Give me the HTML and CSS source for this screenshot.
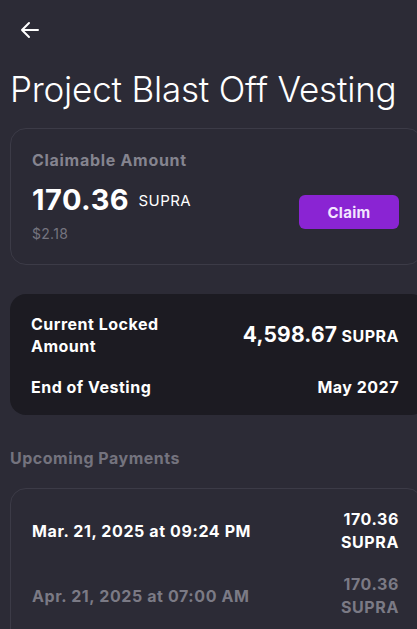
FILE: index.html
```html
<!DOCTYPE html>
<html lang="en">
<head>
    <meta charset="UTF-8">
    <meta name="viewport" content="width=device-width, initial-scale=1.0">
    <title>Project Blast Off Vesting</title>
    <link rel="stylesheet" href="styles.css">
</head>
<body>

<div id="page">
    <button class="back" aria-label="Back">
        <svg width="24" height="24" viewBox="0 0 24 24" fill="none" stroke="#fff" stroke-width="2" stroke-linecap="round" stroke-linejoin="round">
            <path d="M20 12H4M11 5l-7 7 7 7"/>
        </svg>
    </button>

    <h1>Project Blast Off Vesting</h1>

    <div class="card claimable">
        <div>
            <div class="label">Claimable Amount</div>
            <div class="amount">170.36 <span>SUPRA</span></div>
            <div class="usd">$2.18</div>
        </div>
        <button class="claim">Claim</button>
    </div>

    <div class="card locked">
        <div class="row">
            <div class="key">Current Locked<br>Amount</div>
            <div class="val"><span class="big">4,598.67</span> SUPRA</div>
        </div>
        <div class="row">
            <div class="key">End of Vesting</div>
            <div class="val">May 2027</div>
        </div>
    </div>

    <h2>Upcoming Payments</h2>

    <div class="card payments">
        <div class="payment">
            <div>Mar. 21, 2025 at 09:24 PM</div>
            <div class="pay-amt">170.36<br>SUPRA</div>
        </div>
        <div class="payment muted">
            <div>Apr. 21, 2025 at 07:00 AM</div>
            <div class="pay-amt">170.36<br>SUPRA</div>
        </div>
    </div>
</div>

</body>
</html>
```

FILE: styles.css
```css
* {
    box-sizing: border-box;
    font-family: Inter, 'Noto Sans', sans-serif;
}

body {
    margin: 0;
    padding: 0;
    background-color: #2c2b36;
    color: #fff;
    overflow: hidden;
}

#page {
    padding: 18px 0 0 10px;
}

.back {
    background: none;
    border: none;
    padding: 0;
    margin-left: 8px;
    width: 24px;
    height: 24px;
    display: block;
}

h1 {
    font-size: 35px;
    font-weight: 300;
    margin: 25px 0 17px;
    line-height: 44px;
    white-space: nowrap;
    letter-spacing: -0.2px;
}

.card {
    border-radius: 16px;
    margin-right: -6px;
}

.claimable {
    border: 1px solid #3c3b47;
    background-color: #2b2a35;
    display: flex;
    align-items: flex-start;
    justify-content: space-between;
    padding: 20px 23px 0 21px;
    height: 137px;
}

.label {
    color: #85848f;
    font-weight: 700;
    font-size: 16px;
    line-height: 22px;
    letter-spacing: 0.7px;
}

.amount {
    font-size: 29px;
    font-weight: 700;
    margin-top: 12px;
    line-height: 34px;
    letter-spacing: 0.5px;
}
.amount span {
    font-size: 15px;
    font-weight: 400;
    vertical-align: 4px;
    letter-spacing: 0.4px;
    margin-left: 2px;
}

.usd {
    color: #75747f;
    font-size: 14px;
    line-height: 20px;
    margin-top: 6px;
    letter-spacing: 0.3px;
}

.claim {
    background-color: #8a24d3;
    color: #f3e6ff;
    border: none;
    border-radius: 6px;
    width: 100px;
    height: 34px;
    font-size: 15px;
    font-weight: 700;
    margin-top: 46px;
    letter-spacing: 0.3px;
}

.locked {
    background-color: #1c1b22;
    margin-top: 29px;
    margin-right: -10px;
    padding: 19px 28px 15px 21px;
    height: 121px;
}

.locked .row {
    display: flex;
    justify-content: space-between;
    align-items: center;
    font-weight: 700;
    font-size: 16px;
    line-height: 22px;
    letter-spacing: 0.5px;
}
.locked .row + .row {
    margin-top: 19px;
}
.locked .big {
    font-size: 21px;
    letter-spacing: 0.2px;
}

h2 {
    color: #74737e;
    font-size: 16px;
    font-weight: 700;
    margin: 33px 0 20px;
    letter-spacing: 0.5px;
}

.payments {
    border: 1px solid #3c3b47;
    padding: 19px 23px 0 21px;
    height: 160px;
}

.payment {
    display: flex;
    justify-content: space-between;
    align-items: center;
    font-weight: 700;
    font-size: 16px;
    line-height: 23px;
    margin-bottom: 19px;
    letter-spacing: 0.6px;
}
.payment.muted {
    color: #7b7a85;
}
.pay-amt {
    text-align: right;
}
```
